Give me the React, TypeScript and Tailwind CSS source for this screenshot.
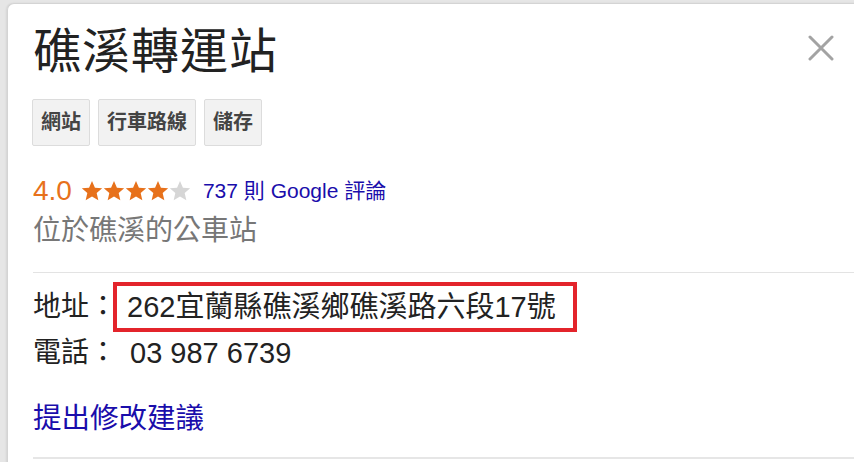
import React from "react";

function Star({ color }: { color: string }) {
  return (
    <svg width="22" height="22" viewBox="0 0 24 24" className="block">
      <path
        d="M12 1.2l3.2 7.2 7.9.7-6 5.2 1.8 7.7L12 18l-6.9 4 1.8-7.7-6-5.2 7.9-.7z"
        fill={color}
      />
    </svg>
  );
}

export default function App() {
  return (
    <div className="w-[854px] h-[462px] overflow-hidden bg-[#e6e6e6] pl-[7px] pt-[3px] font-['Liberation_Sans','Noto_Sans_CJK_TC',sans-serif]">
      <div className="relative h-[470px] w-[860px] rounded-tl-[7px] border-l border-t border-[#d4d4d4] bg-white pl-[25px] pt-[19px] shadow-[-1px_0_2px_rgba(0,0,0,0.08)]">
        <button className="absolute left-[800px] top-[31px] p-0">
          <svg width="26" height="26" viewBox="0 0 26 26" className="block">
            <path d="M2 2L24 24M24 2L2 24" stroke="#a3a3a3" strokeWidth="3" strokeLinecap="round" />
          </svg>
        </button>

        <h1 className="text-[48px] leading-[58px] text-[#222] font-normal tracking-[1px]">礁溪轉運站</h1>

        <div className="mt-[18px] flex gap-[8px] -ml-[1px]">
          {["網站", "行車路線", "儲存"].map((t) => (
            <div
              key={t}
              className="h-[47px] rounded-[2px] border border-[#dcdcdc] bg-[#f2f2f2] px-[8px] text-[20px] font-bold leading-[45px] text-[#444]"
            >
              {t}
            </div>
          ))}
        </div>

        <div className="mt-[29px] flex h-[32px] items-center">
          <span className="text-[28px] leading-[32px] text-[#e7711b]">4.0</span>
          <div className="ml-[9px] flex">
            <Star color="#e7711b" />
            <Star color="#e7711b" />
            <Star color="#e7711b" />
            <Star color="#e7711b" />
            <Star color="#d6d6d6" />
          </div>
          <span className="ml-[12px] text-[21px] leading-[32px] text-[#1a0dab]">737 則 Google 評論</span>
        </div>

        <div className="mt-[6px] text-[28px] leading-[36px] text-[#777]">位於礁溪的公車站</div>

        <div className="mt-[23px] border-t border-[#e3e3e3]" />

        <div className="mt-[9px] flex items-center">
          <span className="text-[28px] leading-[36px] text-[#222]">地址：</span>
          <div className="-ml-[4px] border-[4px] border-[#e3242b] pl-[10px] pr-[17px] text-[29px] leading-[42px] text-[#222]">
            262宜蘭縣礁溪鄉礁溪路六段17號
          </div>
        </div>

        <div className="mt-[3px] flex items-center">
          <span className="text-[28px] leading-[36px] text-[#222]">電話：</span>
          <span className="ml-[13px] text-[29px] leading-[36px] text-[#222]">03 987 6739</span>
        </div>

        <div className="mt-[29px] text-[28.5px] leading-[36px] text-[#1a0dab]">提出修改建議</div>

        <div className="mt-[21px] border-t-2 border-[#e6e6e6]" />
      </div>
    </div>
  );
}
